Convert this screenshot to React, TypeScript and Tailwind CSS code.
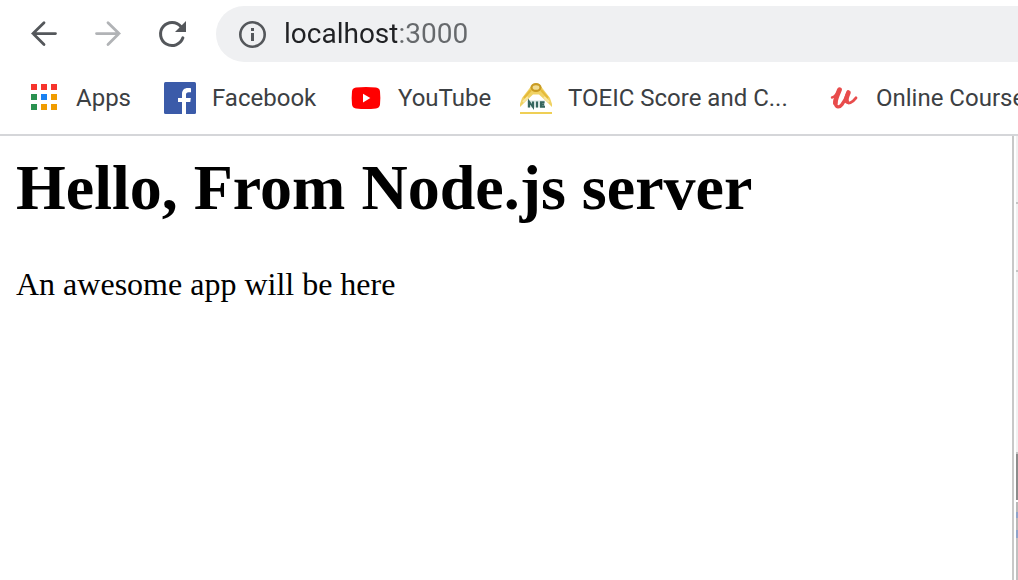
import type { ReactNode } from "react";

function BackIcon() {
  return (
    <svg viewBox="0 0 32 32" className="size-8" fill="none" stroke="currentColor" strokeWidth="2.8" strokeLinecap="round">
      <path d="M27.5 15.600H5M16 4.800L5 15.600l11 10.800" />
    </svg>
  );
}

function ForwardIcon() {
  return (
    <svg viewBox="0 0 32 32" className="size-8" fill="none" stroke="currentColor" strokeWidth="2.8" strokeLinecap="round">
      <path d="M4.500 15.600H27M16 4.800l11 10.800-11 10.800" />
    </svg>
  );
}

function ReloadIcon() {
  return (
    <svg viewBox="0 0 32 32" className="size-8">
      <path
        d="M26.900 19.800A11.500 11.500 0 1 1 25 8.800"
        fill="none"
        stroke="currentColor"
        strokeWidth="3"
        strokeLinecap="round"
      />
      <path d="M30 3V14H19Z" fill="currentColor" />
    </svg>
  );
}

function InfoIcon() {
  return (
    <svg viewBox="0 0 28 28" className="size-7">
      <circle cx="14.500" cy="14.500" r="12.200" fill="none" stroke="currentColor" strokeWidth="2.600" />
      <path d="M13 8h3v3h-3zM13 13h3v8h-3z" fill="currentColor" />
    </svg>
  );
}

function AppsIcon() {
  const colors = ["#f6352d", "#f6352d", "#f6352d", "#2a9150", "#1a80f0", "#f09c00", "#2a9150", "#f09c00", "#f09c00"];
  return (
    <svg viewBox="0 0 32 32" className="size-8">
      {colors.map((c, i) => (
        <rect key={i} x={3 + (i % 3) * 10} y={2 + Math.floor(i / 3) * 10} width="6" height="6" fill={c} />
      ))}
    </svg>
  );
}

function FacebookIcon() {
  return (
    <svg viewBox="0 0 32 32" className="size-8">
      <rect width="32" height="32" rx="1.5" fill="#3b5ba9" />
      <path
        d="M18 32V20h-4v-4h4v-4c0-3.900 2.300-6 5.800-6 1.500 0 2.500.1 3.200.2v4h-2.400c-1.900 0-2.600 1-2.600 2.500V16h4.800L26.300 20H22v12z"
        fill="#fff"
      />
    </svg>
  );
}

function YouTubeIcon() {
  return (
    <svg viewBox="0 0 32 32" className="size-8">
      <path
        d="M6 5.600Q16 4.400 26 5.600Q29.600 6 30 9.500Q30.700 16 30 22.500Q29.600 26 26 26.400Q16 27.400 6 26.400Q2.400 26 2 22.500Q1.300 16 2 9.500Q2.400 6 6 5.600Z"
        fill="#f00"
      />
      <path d="M13 11.800v8.600l7.300-4.300z" fill="#fff" />
    </svg>
  );
}

function ToeicIcon() {
  return (
    <svg viewBox="0 0 32 32" className="size-8">
      <path d="M10.500 5h11L30 16l2 6v3l-6-6-7-6.500h-6L6 19 0 25v-3l2-6z" fill="#f0d264" />
      <path d="M4 16l7-8M28 16l-7-8" stroke="#e5ba3a" strokeWidth="2" />
      <path d="M3 20l5-5M29 20l-5-5" stroke="#f8e7a4" strokeWidth="2" />
      <ellipse cx="16" cy="5.500" rx="4.500" ry="3.400" fill="#f1dc92" stroke="#c99b22" strokeWidth="2.200" />
      <path d="M7 18.500h18v7H7z" fill="#5a8a84" opacity=".25" />
      <path
        d="M9 25.500v-6l4 5.500v-5.500M17 19.500v6M24.500 20.200H21v4.600h4M21 22.500h3"
        fill="none"
        stroke="#37665f"
        strokeWidth="2"
      />
      <path d="M0 30h32v2H0z" fill="#efcf55" />
    </svg>
  );
}

function UdemyIcon() {
  return (
    <svg viewBox="0 0 32 32" className="size-8" fill="none" stroke="#e84c4c" strokeLinecap="round" strokeLinejoin="round">
      <path d="M4 15.500C7 14.800 9.200 11.500 11.300 8" strokeWidth="2.400" />
      <path d="M11.500 7.800C9.500 12.500 7 17.500 7.400 21.200" strokeWidth="4.800" />
      <path d="M7.400 21c.3 5 4.200 4.800 6.600 1.500 2.400-3.300 4.300-7 6-11.500" strokeWidth="3.400" />
      <path d="M20.500 10.500C19 14 17.800 17 18.700 19" strokeWidth="4.600" />
      <path d="M18.700 19.500c1.300 3 5.300 1.500 9.300-3.700" strokeWidth="2.800" />
    </svg>
  );
}

function Bookmark({ href, icon, label, width }: { href: string; icon: ReactNode; label: string; width: string }) {
  return (
    <a href={href} className="flex shrink-0 items-center gap-4">
      {icon}
      <span className={`whitespace-nowrap ${width}`}>{label}</span>
    </a>
  );
}

function Toolbar() {
  return (
    <div className="flex items-center pt-1.5 pl-7 text-[#54575b]">
      <nav aria-label="History" className="flex shrink-0 items-center gap-8">
        <button type="button" aria-label="Back">
          <BackIcon />
        </button>
        <button type="button" aria-label="Forward" disabled className="text-[#b1b3b6]">
          <ForwardIcon />
        </button>
        <button type="button" aria-label="Reload">
          <ReloadIcon />
        </button>
      </nav>
      <div className="ml-7 flex h-14 min-w-0 flex-1 items-center gap-4 rounded-l-full bg-[#eff0f2] pl-[22px]">
        <button type="button" aria-label="View site information" className="shrink-0">
          <InfoIcon />
        </button>
        <input
          type="text"
          aria-label="Address"
          defaultValue="localhost:3000"
          className="min-w-0 flex-1 bg-[linear-gradient(to_right,#202124_115px,#66696c_115px)] bg-clip-text pl-0.5 text-[28px] leading-9 text-transparent caret-black outline-none"
        />
      </div>
    </div>
  );
}

function BookmarksBar() {
  return (
    <nav aria-label="Bookmarks" className="flex gap-8 overflow-hidden border-b-2 border-[#d5d6d9] py-5 pl-7 text-2xl leading-8 text-[#3c4043]">
      <Bookmark href="#apps" icon={<AppsIcon />} label="Apps" width="w-14" />
      <Bookmark href="#facebook" icon={<FacebookIcon />} label="Facebook" width="w-[106px]" />
      <Bookmark href="#youtube" icon={<YouTubeIcon />} label="YouTube" width="w-[90px]" />
      <Bookmark href="#toeic" icon={<ToeicIcon />} label="TOEIC Score and C..." width="w-[228px]" />
      <Bookmark href="#courses" icon={<UdemyIcon />} label="Online Courses" width="w-auto" />
    </nav>
  );
}

function SidePanelEdge() {
  return (
    <div aria-hidden="true" className="flex w-1.5 shrink-0 flex-col border-l-2 border-[#c8c8c8] pl-0.5">
      <div className="h-[66px] bg-[#f1f1f1]" />
      <div className="h-0.5 bg-[#c4c4c4]" />
      <div className="h-[66px] bg-[#f1f1f1]" />
      <div className="h-0.5 bg-[#c4c4c4]" />
      <div className="h-[180px] bg-[#f1f1f1]" />
      <div className="h-0.5 bg-[#c4c4c4]" />
      <div className="h-[46px] bg-[#8c8c8c]" />
      <div className="h-0.5 bg-white" />
      <div className="h-2.5 bg-[#b8b8b8]" />
      <div className="h-1.5 bg-[#8fa3c8]" />
      <div className="h-3 bg-[#b8b8b8]" />
      <div className="h-2 bg-[#8fa3c8]" />
      <div className="flex-1 bg-[#c0c0c0]" />
    </div>
  );
}

export default function App() {
  return (
    <div className="flex min-h-screen flex-col overflow-hidden bg-white font-['Roboto',sans-serif]">
      <header>
        <Toolbar />
        <BookmarksBar />
      </header>
      <div className="flex flex-1">
        <main className="min-w-0 flex-1 px-4 pt-4 font-['Liberation_Serif',serif] text-black">
          <h1 className="text-[64px] leading-[72px] font-bold">Hello, From Node.js server</h1>
          <p className="mt-10 text-[32px] leading-10">An awesome app will be here</p>
        </main>
        <SidePanelEdge />
      </div>
    </div>
  );
}
